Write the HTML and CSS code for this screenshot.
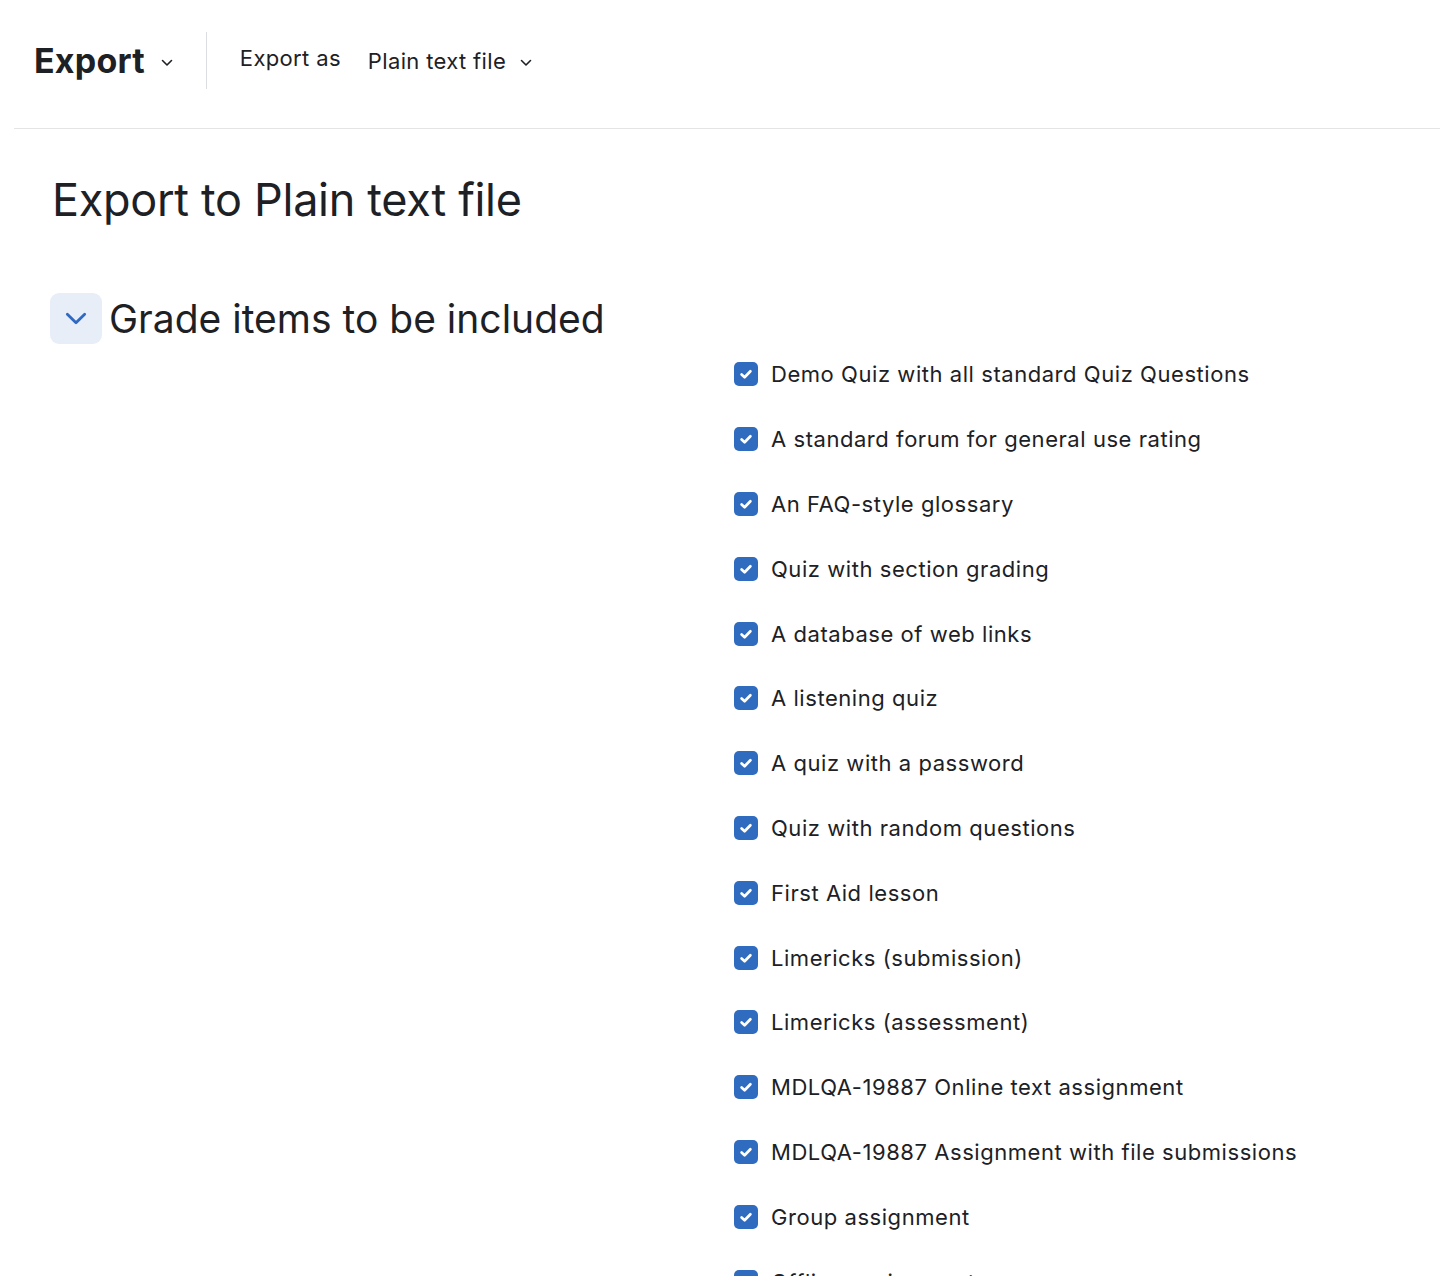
FILE: index.html
```html
<!DOCTYPE html>
<html lang="en">
<head>
    <meta charset="UTF-8">
    <meta name="viewport" content="width=device-width, initial-scale=1.0">
    <title>Export to Plain text file</title>
    <link rel="stylesheet" href="styles.css">
</head>
<body>
    <header class="tertiary-nav">
        <div class="nav-title">
            <h2>Export</h2>
            <svg class="caret" viewBox="0 0 12 8" width="12" height="8"><path d="M1.5 1.5 6 6l4.5-4.5" fill="none" stroke="currentColor" stroke-width="1.6" stroke-linecap="round" stroke-linejoin="round"/></svg>
        </div>
        <div class="nav-divider"></div>
        <div class="nav-select">
            <span class="select-label">Export as</span>
            <span class="select-value">Plain text file</span>
            <svg class="caret" viewBox="0 0 12 8" width="12" height="8"><path d="M1.5 1.5 6 6l4.5-4.5" fill="none" stroke="currentColor" stroke-width="1.6" stroke-linecap="round" stroke-linejoin="round"/></svg>
        </div>
    </header>

    <main class="content">
        <h1>Export to Plain text file</h1>

        <section class="fieldset">
            <div class="legend">
                <span class="collapse-btn">
                    <svg viewBox="0 0 20 12" width="22" height="13"><path d="M2 2l8 8 8-8" fill="none" stroke="currentColor" stroke-width="2.6" stroke-linecap="round" stroke-linejoin="round"/></svg>
                </span>
                <h3>Grade items to be included</h3>
            </div>

            <div class="form-row">
                <div class="form-label"></div>
                <ul class="checks" id="items"></ul>
            </div>
        </section>
    </main>

    <script>
        const items = [
            "Demo Quiz with all standard Quiz Questions",
            "A standard forum for general use rating",
            "An FAQ-style glossary",
            "Quiz with section grading",
            "A database of web links",
            "A listening quiz",
            "A quiz with a password",
            "Quiz with random questions",
            "First Aid lesson",
            "Limericks (submission)",
            "Limericks (assessment)",
            "MDLQA-19887 Online text assignment",
            "MDLQA-19887 Assignment with file submissions",
            "Group assignment",
            "Offline assignment",
            "Course total"
        ];

        const tick = '<svg viewBox="0 0 16 16" width="16" height="16"><path d="M3.6 8.4 6.6 11.2 12.4 5.2" fill="none" stroke="#fff" stroke-width="2.7" stroke-linecap="round" stroke-linejoin="round"/></svg>';

        document.getElementById("items").innerHTML = items.map(name => `
            <li><span class="box">${tick}</span><span>${name}</span></li>
        `).join("");
    </script>
</body>
</html>
```

FILE: styles.css
```css
body {
    font-family: Inter, "Noto Sans", sans-serif;
    color: #1d2125;
    background: #fff;
    margin: 0;
}

.tertiary-nav {
    display: flex;
    align-items: center;
    height: 129px;
    margin-left: 14px;
    padding-left: 20px;
    padding-bottom: 7px;
    border-bottom: 1px solid #e3e4e6;
    box-sizing: border-box;
}

.nav-title {
    display: flex;
    align-items: center;
    gap: 16px;
    padding-right: 33px;
}

.nav-title h2 {
    margin: 0;
    font-size: 34px;
    font-weight: 700;
    letter-spacing: 0.2px;
}

.caret {
    color: #1d2125;
    margin-top: 4px;
}

.nav-divider {
    width: 1px;
    height: 57px;
    background: #dcdde0;
}

.nav-select {
    display: flex;
    align-items: center;
    padding-left: 33px;
    font-size: 22px;
    letter-spacing: 0.35px;
}

.select-label {
    margin-right: 27px;
    margin-top: -5px;
}

.select-value {
    margin-right: 14px;
}

.content {
    padding: 43px 52px 0;
}

h1 {
    margin: 0;
    font-size: 45px;
    font-weight: 400;
    letter-spacing: -0.3px;
}

.legend {
    display: flex;
    align-items: center;
    gap: 7px;
    margin-top: 66px;
    margin-left: -2px;
}

.collapse-btn {
    width: 52px;
    height: 51px;
    border-radius: 9px;
    background: #e8eef8;
    color: #2f6ac0;
    display: flex;
    align-items: center;
    justify-content: center;
}

.legend h3 {
    margin: 0;
    font-size: 39px;
    font-weight: 400;
    letter-spacing: 0;
}

.form-row {
    display: grid;
    grid-template-columns: 682px 1fr;
    margin-top: -2px;
}

.checks {
    list-style: none;
    margin: 0;
    padding: 0;
}

.checks li {
    display: flex;
    align-items: center;
    gap: 13px;
    height: 64.8px;
    font-size: 22px;
    letter-spacing: 0.55px;
}

.box {
    width: 24px;
    height: 24px;
    border-radius: 5px;
    background: #2f6bbf;
    display: flex;
    align-items: center;
    justify-content: center;
    flex-shrink: 0;
}
```
